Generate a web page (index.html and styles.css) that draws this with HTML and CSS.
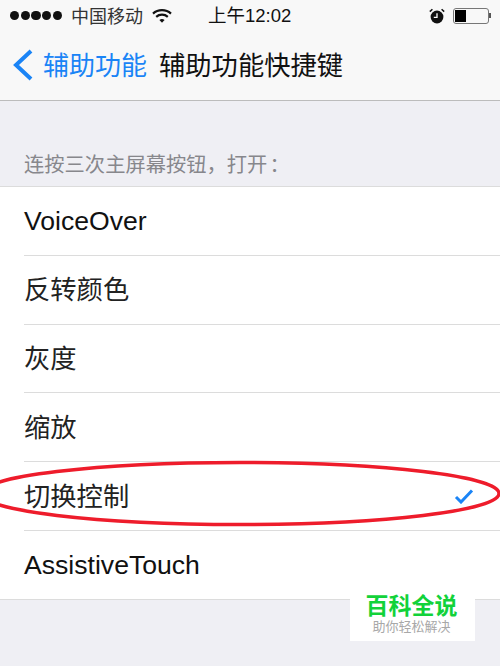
FILE: index.html
```html
<!DOCTYPE html>
<html lang="zh-CN">
<head>
    <meta charset="UTF-8">
    <meta name="viewport" content="width=device-width, initial-scale=1.0">
    <title>辅助功能快捷键</title>
    <link rel="stylesheet" href="styles.css">
</head>
<body>
    <div class="phone">
        <header class="top">
            <div class="status">
                <div class="status-left">
                    <div class="signal"><i></i><i></i><i></i><i></i><i></i></div>
                    <span class="carrier">中国移动</span>
                    <svg class="wifi" width="20" height="16" viewBox="0 0 20 16">
                        <path d="M1 5.6C6 1 14 1 19 5.6" fill="none" stroke="#111" stroke-width="2.2"/>
                        <path d="M4.2 8.8C7.4 6 12.6 6 15.8 8.8" fill="none" stroke="#111" stroke-width="2.2"/>
                        <path d="M7.4 12C9 10.7 11 10.7 12.6 12L10 14.8Z" fill="#111"/>
                    </svg>
                </div>
                <span class="time">上午12:02</span>
                <div class="status-right">
                    <svg class="alarm" width="16" height="16" viewBox="0 0 16 16">
                        <circle cx="8" cy="9" r="6.4" fill="#111"/>
                        <path d="M8 5.2V9.4H4.8" fill="none" stroke="#fff" stroke-width="1.3"/>
                        <path d="M0.8 3.6L3.4 1.2M15.2 3.6L12.6 1.2" stroke="#111" stroke-width="1.5"/>
                    </svg>
                    <div class="battery"><div class="battery-fill"></div></div>
                    <div class="battery-tip"></div>
                </div>
            </div>
            <nav class="nav">
                <svg class="back" width="22" height="34" viewBox="0 0 22 34">
                    <path d="M19 3L4 17L19 31" fill="none" stroke="#1a84f6" stroke-width="4"/>
                </svg>
                <span class="back-label">辅助功能</span>
                <span class="nav-title">辅助功能快捷键</span>
            </nav>
        </header>

        <p class="section-label">连按三次主屏幕按钮，打开<span class="colon">：</span></p>

        <ul class="list">
            <li class="row latin">VoiceOver</li>
            <li class="row">反转颜色</li>
            <li class="row">灰度</li>
            <li class="row">缩放</li>
            <li class="row">切换控制
                <svg class="check" width="20" height="16" viewBox="0 0 20 16">
                    <path d="M2 9L7 14L18 2.5" fill="none" stroke="#1a84f6" stroke-width="3"/>
                </svg>
            </li>
            <li class="row latin">AssistiveTouch</li>
        </ul>

        <svg class="circle" width="500" height="70" viewBox="0 0 500 70">
            <ellipse cx="240" cy="33.5" rx="259" ry="31" fill="none" stroke="#ee1c2b" stroke-width="3.5"/>
        </svg>

        <div class="mark">
            <div class="mark-name">百科全说</div>
            <div class="mark-sub">助你轻松解决</div>
        </div>
    </div>
</body>
</html>
```

FILE: styles.css
```css
body {
    margin: 0;
    padding: 0;
    background-color: #efeff4;
    font-family: "Liberation Sans", "Noto Sans CJK SC", sans-serif;
}
.phone {
    position: relative;
    width: 500px;
    height: 666px;
    overflow: hidden;
}
.top {
    height: 100px;
    background-color: #f8f8f8;
    border-bottom: 1px solid #bcbcbc;
}
.status {
    height: 31px;
    padding: 0 9px 0 10px;
    display: flex;
    align-items: center;
    color: #111;
}
.status-left {
    width: 198px;
    display: flex;
    align-items: center;
}
.signal {
    display: flex;
    gap: 1.5px;
}
.signal i {
    width: 9.2px;
    height: 9.2px;
    border-radius: 50%;
    background-color: #111;
}
.carrier {
    margin-left: 9px;
    padding-bottom: 2px;
    font-size: 18px;
    color: #333;
}
.wifi {
    margin-left: 9px;
}
.time {
    padding-bottom: 3px;
    font-size: 18.5px;
}
.status-right {
    margin-left: auto;
    display: flex;
    align-items: center;
}
.alarm {
    margin-right: 8px;
}
.battery {
    width: 36px;
    height: 16px;
    padding: 1px;
    border: 1px solid #777;
    border-radius: 3px;
    box-sizing: border-box;
}
.battery-fill {
    width: 11px;
    height: 12px;
    background-color: #000;
}
.battery-tip {
    width: 2px;
    height: 5px;
    background-color: #555;
}
.nav {
    height: 69px;
    padding-left: 12px;
    padding-bottom: 4px;
    box-sizing: border-box;
    display: flex;
    align-items: center;
    font-size: 26px;
}
.back {
    margin-right: 9px;
    margin-top: 3px;
}
.back-label {
    color: #1a84f6;
}
.nav-title {
    margin-left: 12px;
    font-size: 26.3px;
    color: #111;
}
.section-label {
    margin: 0;
    padding: 53px 0 0 24px;
    height: 32px;
    line-height: 22px;
    font-size: 20.3px;
    color: #87878c;
}
.colon {
    padding-left: 2px;
}
.list {
    margin: 0;
    padding: 0;
    list-style: none;
    background-color: #fff;
    border-top: 1px solid #dcdcdc;
    border-bottom: 1px solid #dcdcdc;
}
.row {
    height: 68.8px;
    margin-left: 24px;
    padding-right: 26px;
    padding-bottom: 4px;
    box-sizing: border-box;
    display: flex;
    align-items: center;
    justify-content: space-between;
    font-size: 26.3px;
    color: #222;
    border-bottom: 1px solid #dcdcdc;
}
.row:last-child {
    height: 67.8px;
    border-bottom: none;
}
.latin {
    padding-top: 2px;
    padding-bottom: 0;
    font-size: 26.6px;
    color: #111;
}
.check {
    margin-top: 3px;
}
.circle {
    position: absolute;
    left: 0;
    top: 460px;
}
.mark {
    position: absolute;
    left: 350px;
    top: 593px;
    width: 125px;
    height: 48px;
    padding-right: 2px;
    box-sizing: border-box;
    background-color: #fff;
    text-align: center;
}
.mark-name {
    font-size: 23px;
    line-height: 26px;
    font-weight: bold;
    color: #12d23a;
}
.mark-sub {
    font-size: 13px;
    line-height: 16px;
    color: #a8a8a8;
}
```
